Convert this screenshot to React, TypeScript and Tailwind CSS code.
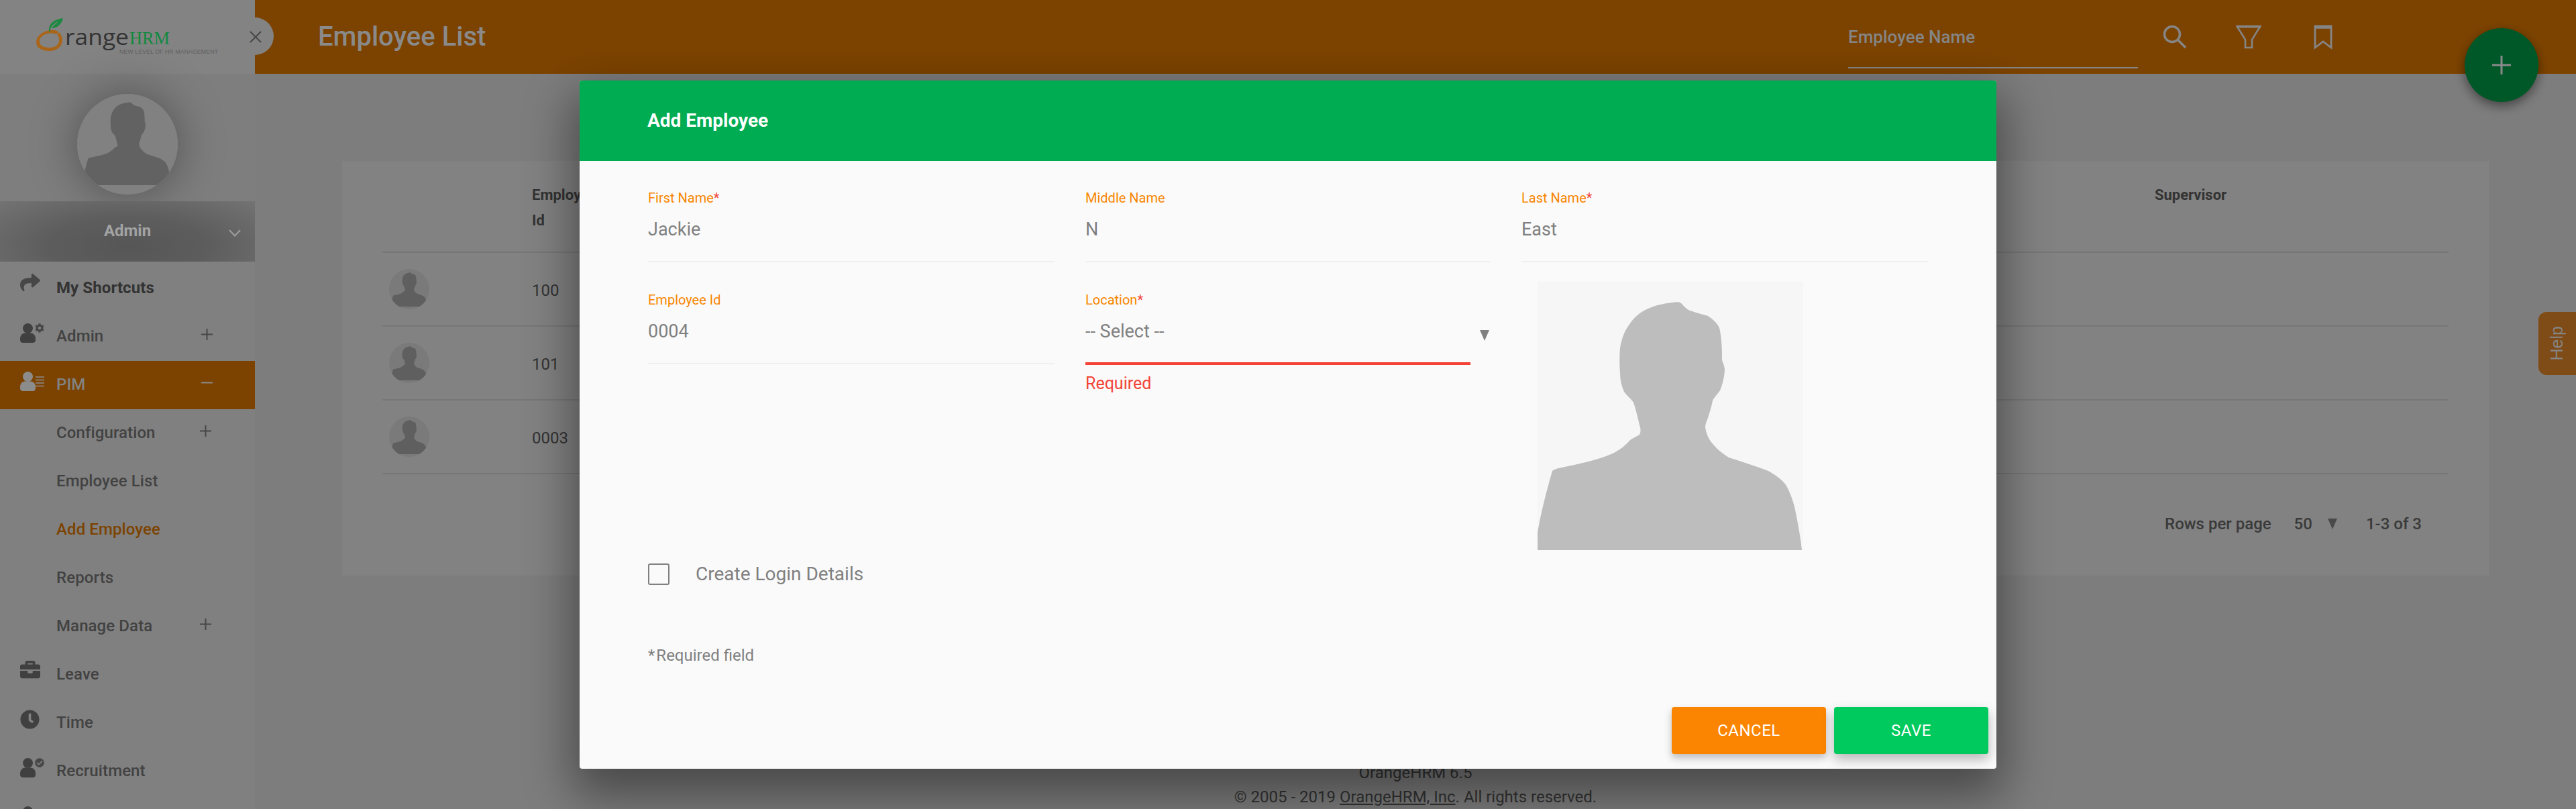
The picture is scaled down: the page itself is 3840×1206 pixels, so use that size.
import React from "react";
import { FaShare, FaCog, FaBriefcase, FaClock, FaCheckCircle } from "react-icons/fa";

const SIL = "M201 31C208 30 212 30 214 32C218 36 222 41 227 43C240 47 250 50 254 51C265 58 271 66 272 73C275 90 275 105 275 117C277 122 279 127 279 132C278 145 275 155 272 162C268 168 263 173 261 177C259 188 256 196 254 203C252 208 250 212 250 217C251 225 254 232 258 238C266 248 274 255 285 262C305 268 325 275 344 282C358 290 368 298 372 306C378 318 382 330 384 340C388 360 392 380 394 400L394 520L0 520L0 373C6 340 14 310 22 282C24 280 28 279 31 278C60 272 90 266 112 256C124 250 132 243 138 236C144 232 149 230 152 228C154 224 154 219 152 214C150 205 147 192 143 180C139 174 133 170 129 164C125 155 123 146 123 136C122 122 122 110 123 99C125 85 130 72 138 62C146 50 158 42 170 38C180 34 192 32 201 31Z";

function Silhouette({ className, fill }: { className?: string; fill: string }) {
  return (
    <svg viewBox="0 0 396 400" className={className} aria-hidden="true">
      <path d={SIL} fill={fill} />
    </svg>
  );
}

function CircleAvatar({ box, inner, bg, fill }: { box: string; inner: string; bg: string; fill: string }) {
  return (
    <div className={`${box} ${bg} rounded-full overflow-hidden flex justify-center items-start shrink-0`}>
      <Silhouette className={inner} fill={fill} />
    </div>
  );
}

function Person({ color = "#404040" }: { color?: string }) {
  return (
    <svg width="23" height="29" viewBox="0 0 23 29" className="block shrink-0" aria-hidden="true">
      <circle cx="11.5" cy="7.5" r="7.5" fill={color} />
      <path d="M0 23C0 17 4 14.500 8 14.500H15C19 14.500 23 17 23 23V25C23 27.500 21 29 19 29H4C2 29 0 27.500 0 25Z" fill={color} />
    </svg>
  );
}

function MenuRow({
  icon,
  label,
  text,
  active,
  bold,
  sign,
}: {
  icon?: React.ReactNode;
  label?: string;
  text?: string;
  active?: boolean;
  bold?: boolean;
  sign?: "+" | "-" | "sub+";
}) {
  return (
    <div className={`h-[72px] flex items-center relative ${active ? "bg-[#7c4300]" : ""}`}>
      <div className="w-[84px] pl-[30px] h-[30px] -mt-[10px] flex items-start shrink-0">{icon}</div>
      {label && (
        <span
          className={`text-[24px] -mt-[2px] tracking-[0.1px] ${bold ? "font-bold" : "font-medium"} ${text ?? (active ? "text-[#828282]" : "text-[#424242]")}`}
        >
          {label}
        </span>
      )}
      {sign && (
        <svg
          width="17"
          height="17"
          viewBox="0 0 17 17"
          className={`absolute top-[24px] ${sign === "sub+" ? "left-[298px]" : "left-[300px]"}`}
          aria-hidden="true"
        >
          <path d="M0 8.500H17" stroke={active ? "#8a8a8a" : "#474747"} strokeWidth="2" />
          {sign !== "-" && <path d="M8.500 0V17" stroke="#474747" strokeWidth="2" />}
        </svg>
      )}
    </div>
  );
}

function Logo() {
  return (
    <svg width="280" height="60" viewBox="0 0 280 60" className="block" aria-label="OrangeHRM">
      <path d="M33 20C28 17.500 22 17 16 19C6 22 0 29 0 36C0 44 8 49 20 49C31 49 39 42 39 33C39 28 37 24 34 21L31 24C33 26 34 29 34 33C34 40 28 44 20 44C11 44 5 41 5 35C5 29 10 24 18 23C22 22 26 23 30 24Z" fill="#a9651a" />
      <path d="M19 15C21 6 28 2 40 0C38 9 31 15 23 15C27 10 30 8 33 5C28 7 24 10 21 16L21 20H19Z" fill="#1b8a40" />
      <text x="43" y="40" fontFamily="'Open Sans',sans-serif" fontSize="33" fill="#333333" textLength="95" lengthAdjust="spacingAndGlyphs">range</text>
      <text x="139" y="39" fontFamily="'Liberation Serif',serif" fontSize="27" fill="#12893f" textLength="60" lengthAdjust="spacingAndGlyphs">HRM</text>
      <text x="124" y="53" fontFamily="'Liberation Sans',sans-serif" fontSize="9" fill="#606060" textLength="147" lengthAdjust="spacingAndGlyphs">NEW LEVEL OF HR MANAGEMENT</text>
    </svg>
  );
}

function Sidebar() {
  return (
    <aside className="w-[380px] shrink-0 bg-[#808080] relative">
      <div className="h-[110px] bg-[#838383] pl-[54px] pt-[27px]">
        <Logo />
      </div>
      <div className="absolute left-[380px] top-[26px] w-[28px] h-[56px] bg-[#838383] rounded-r-[28px] z-10" />
      <svg width="18" height="18" viewBox="0 0 18 18" className="absolute left-[372px] top-[46px] z-20" aria-hidden="true">
        <path d="M1 1L17 17M17 1L1 17" stroke="#474747" strokeWidth="2" />
      </svg>
      <div className="h-[190px] flex justify-center pt-[30px] bg-[#7e7e7e]">
        <div className="rounded-full shadow-[0_0_70px_rgba(0,0,0,0.38)] h-[150px]">
          <CircleAvatar box="w-[150px] h-[150px]" inner="w-[132px] h-[134px] mt-[2px]" bg="bg-[#818181]" fill="#626262" />
        </div>
      </div>
      <div className="h-[90px] relative flex justify-center pt-[26px] mb-[4px] bg-[radial-gradient(ellipse_at_50%_75%,#565656_0%,#5d5d5d_45%,#737373_100%)]">
        <span className="text-[24px] font-bold text-[#a3a3a3]">Admin</span>
        <svg width="18" height="11" viewBox="0 0 18 11" className="absolute left-[341px] top-[42px]" aria-hidden="true">
          <path d="M1 1L9 9.500L17 1" fill="none" stroke="#9c9c9c" strokeWidth="2.200" />
        </svg>
      </div>
      <MenuRow bold label="My Shortcuts" text="text-[#333333]" icon={<FaShare className="w-[34px] h-[30px] text-[#474747] -mt-[4px] -ml-[2px]" />} />
      <MenuRow
        label="Admin"
        sign="+"
        icon={
          <span className="flex">
            <Person />
            <FaCog className="w-[14px] h-[14px] text-[#474747] -ml-[1px]" />
          </span>
        }
      />
      <MenuRow
        label="PIM"
        active
        sign="-"
        icon={
          <span className="flex">
            <Person color="#8c8c8c" />
            <svg width="13" height="22" viewBox="0 0 13 22" className="mt-[6px]" aria-hidden="true">
              <path d="M0 2H13M0 6.500H13M0 11H13M0 15.500H13" stroke="#8c8c8c" strokeWidth="1.600" />
            </svg>
          </span>
        }
      />
      <MenuRow label="Configuration" sign="sub+" />
      <MenuRow label="Employee List" />
      <MenuRow label="Add Employee" text="text-[#7c4300]" />
      <MenuRow label="Reports" />
      <MenuRow label="Manage Data" sign="sub+" />
      <MenuRow label="Leave" icon={<FaBriefcase className="w-[30px] h-[30px] text-[#404040] -mt-[3px]" />} />
      <MenuRow label="Time" icon={<FaClock className="w-[29px] h-[29px] text-[#404040]" />} />
      <MenuRow
        label="Recruitment"
        icon={
          <span className="flex">
            <Person />
            <FaCheckCircle className="w-[14px] h-[14px] text-[#474747] -ml-[1px]" />
          </span>
        }
      />
      <MenuRow icon={<Person />} />
    </aside>
  );
}

function TopBar() {
  return (
    <header className="h-[110px] bg-[#7c4300] flex items-center pl-[94px] relative">
      <h1 className="text-[40px] font-medium text-[#8a8a8a] flex-1">Employee List</h1>
      <div className="w-[432px] h-[110px] relative mr-[37px]">
        <span className="block pt-[39px] text-[26px] leading-[32px] font-medium text-[#858585]">Employee Name</span>
        <div className="absolute left-0 right-0 top-[100px] h-[2px] bg-[#858585]" />
      </div>
      <svg width="36" height="36" viewBox="0 0 36 36" className="mr-[73px]" aria-hidden="true">
        <circle cx="14" cy="14" r="11.500" fill="none" stroke="#858585" strokeWidth="3.500" />
        <path d="M22.500 22.500L34 34" stroke="#858585" strokeWidth="3.500" />
      </svg>
      <svg width="38" height="36" viewBox="0 0 38 36" className="mr-[78px]" aria-hidden="true">
        <path d="M1.500 2H36.500L24 22V34H14V22Z" fill="none" stroke="#858585" strokeWidth="2.600" />
        <path d="M1 3H37" stroke="#858585" strokeWidth="3" />
      </svg>
      <svg width="28" height="37" viewBox="0 0 28 37" className="mr-[363px]" aria-hidden="true">
        <path d="M2 2H26V34L14 25L2 34Z" fill="none" stroke="#858585" strokeWidth="2.800" />
        <path d="M2 4H26" stroke="#858585" strokeWidth="3.500" />
      </svg>
    </header>
  );
}

function Content() {
  return (
    <main className="flex-1 relative bg-[#7d7d7d]">
      <TopBar />
      <section className="ml-[130px] mt-[130px] w-[3200px] h-[618px] bg-[#828282] px-[60px] text-[#333333]">
        <div className="grid grid-cols-[223px_2419px_1fr] h-[137px] border-b-2 border-[#767676] pt-[32px] text-[22px] leading-[38px] font-bold">
          <span />
          <span>
            Employee
            <br />
            Id
          </span>
          <span>Supervisor</span>
        </div>
        {["100", "101", "0003"].map((id) => (
          <div key={id} className="h-[110px] border-b-2 border-[#767676] flex items-center pl-[10px]">
            <CircleAvatar box="w-[60px] h-[60px]" inner="w-[54px] h-[55px] mt-[1px]" bg="bg-[#7a7a7a]" fill="#5f5f5f" />
            <span className="ml-[153px] pt-[3px] text-[24px]">{id}</span>
          </div>
        ))}
        <div className="flex justify-end items-center h-[148px] pr-[40px] text-[24px] font-medium text-[#3a3a3a]">
          <span>Rows per page</span>
          <span className="ml-[34px]">50</span>
          <svg width="14" height="16" viewBox="0 0 14 16" className="ml-[23px]" aria-hidden="true">
            <path d="M0 0H14L7 16Z" fill="#4a4a4a" />
          </svg>
          <span className="ml-[43px]">1-3 of 3</span>
        </div>
      </section>
      <footer className="mt-[276px] text-center text-[24px] leading-[36px] text-[#333333]">
        <p>OrangeHRM 6.5</p>
        <p>
          © 2005 - 2019 <span className="underline">OrangeHRM, Inc</span>. All rights reserved.
        </p>
      </footer>
      <button className="absolute right-[56px] top-[42px] w-[110px] h-[110px] rounded-full bg-[#005728] shadow-[0_6px_16px_rgba(0,0,0,0.45)] flex items-center justify-center">
        <svg width="28" height="28" viewBox="0 0 28 28" aria-hidden="true">
          <path d="M0 14H28M14 0V28" stroke="#8a8a8a" strokeWidth="3" />
        </svg>
      </button>
      <div className="absolute right-0 top-[465px] w-[56px] h-[94px] rounded-l-[12px] bg-[#7f4b17] flex items-center justify-center">
        <span className="-rotate-90 text-[25px] text-[#858585] font-[Liberation_Sans,sans-serif]">Help</span>
      </div>
    </main>
  );
}

function Label({ text, required }: { text: string; required?: boolean }) {
  return (
    <div className="h-[24px] text-[20px] leading-[24px] text-[#f88600]">
      {text}
      {required && <span className="text-[#f44336]">*</span>}
    </div>
  );
}

function Field({ label, required, value }: { label: string; required?: boolean; value: string }) {
  return (
    <div className="h-[108px] border-b-2 border-[#f0f0f0]">
      <Label text={label} required={required} />
      <div className="mt-[17px] text-[27px] leading-[36px] text-[#808080]">{value}</div>
    </div>
  );
}

function Modal() {
  return (
    <div className="absolute inset-0 flex justify-center items-start pt-[120px] z-30 overflow-hidden">
      <div className="w-[2112px] h-[1026px] bg-[#fafafa] rounded-[4px] shadow-[0_30px_70px_10px_rgba(0,0,0,0.42)] overflow-hidden">
        <div className="h-[120px] bg-[#00ac51] flex items-center pl-[101px] text-[28px] font-bold text-white">Add Employee</div>
        <div className="pt-[43px] pl-[102px]">
          <div className="grid grid-cols-[606px_604px_606px] gap-x-[46px] gap-y-[44px] items-start">
            <Field label="First Name" required value="Jackie" />
            <Field label="Middle Name" value="N" />
            <Field label="Last Name" required value="East" />
            <Field label="Employee Id" value="0004" />
            <div className="relative">
              <div className="h-[109px] w-[574px] border-b-4 border-[#f44336]">
                <Label text="Location" required />
                <div className="mt-[17px] text-[27px] leading-[36px] text-[#808080]">-- Select --</div>
              </div>
              <svg width="14" height="16" viewBox="0 0 14 16" className="absolute left-[588px] top-[57px]" aria-hidden="true">
                <path d="M0 0H14L7 16Z" fill="#808080" />
              </svg>
              <div className="mt-[13px] text-[25px] leading-[30px] text-[#f44336]">Required</div>
            </div>
            <div className="-mt-[15px] ml-[24px] w-[396px] h-[400px] bg-[#f6f6f6] overflow-hidden">
              <Silhouette className="w-[396px] h-[400px]" fill="#bdbdbd" />
            </div>
          </div>
          <label className="mt-[20px] flex items-center h-[32px]">
            <span className="w-[32px] h-[32px] rounded-[3px] border-2 border-[#808080] shrink-0" />
            <span className="ml-[39px] text-[28px] text-[#808080]">Create Login Details</span>
          </label>
          <div className="mt-[93px] h-[24px] text-[24px] leading-[24px] text-[#808080]">
            *<span className="ml-[2px]">Required field</span>
          </div>
          <div className="mt-[65px] flex justify-end gap-[12px] pr-[12px]">
            <button className="w-[230px] h-[70px] rounded-[4px] bg-[#fb8500] text-white text-[24px] tracking-[0.5px] shadow-[0_6px_12px_rgba(0,0,0,0.25)]">CANCEL</button>
            <button className="w-[230px] h-[70px] rounded-[4px] bg-[#00c95e] text-white text-[24px] tracking-[0.5px] shadow-[0_8px_18px_rgba(0,0,0,0.28)]">SAVE</button>
          </div>
        </div>
      </div>
    </div>
  );
}

export default function App() {
  return (
    <div className="relative w-[3840px] h-[1206px] overflow-hidden flex font-[Roboto,sans-serif]">
      <Sidebar />
      <Content />
      <Modal />
    </div>
  );
}
